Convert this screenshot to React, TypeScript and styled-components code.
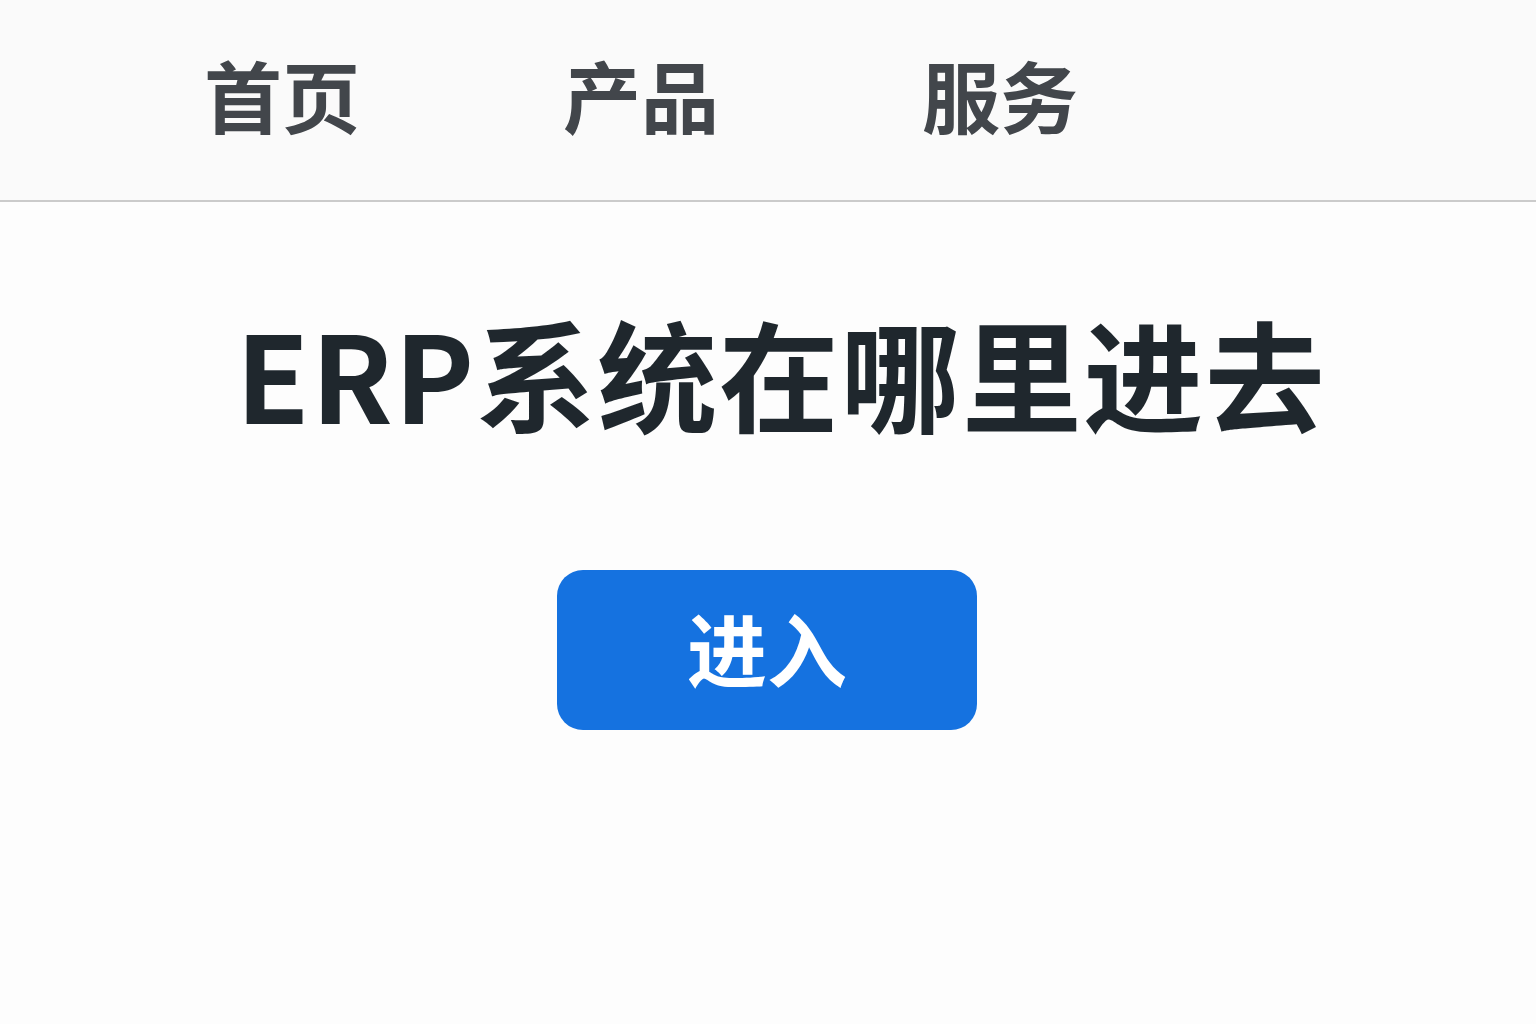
import React from 'react'
import styled, { createGlobalStyle } from 'styled-components'

const GlobalStyle = createGlobalStyle`
	html, body {
		margin: 0;
		padding: 0;
		background: #fdfdfd;
	}
	body {
		font-family: 'Noto Sans CJK SC', 'Noto Sans', sans-serif;
	}
`

const Page = styled.div`
	width: 1536px;
	min-height: 1024px;
	display: flex;
	flex-direction: column;
`

const NavBar = styled.nav`
	height: 202px;
	box-sizing: border-box;
	background: #fafafa;
	border-bottom: 2px solid #cbcbcb;
	display: flex;
	align-items: center;
	padding-left: 204px;
	gap: 203px;
`

const NavLink = styled.a`
	font-size: 78px;
	font-weight: 700;
	color: #42464b;
	text-decoration: none;
	line-height: 1;
	margin-top: -12px;
`

const Main = styled.main`
	display: flex;
	flex-direction: column;
	align-items: center;
	padding-top: 92px;
	padding-left: 26px;
`

const Title = styled.h1`
	margin: 0;
	font-size: 120px;
	font-weight: 700;
	line-height: 1.3;
	color: #1f272d;
	letter-spacing: 1.5px;
`

const EnterButton = styled.button`
	margin-top: 120px;
	margin-left: -28px;
	width: 420px;
	height: 160px;
	padding: 0 0 8px;
	border: none;
	border-radius: 26px;
	background: #1572e0;
	color: #ffffff;
	font-family: inherit;
	font-size: 80px;
	font-weight: 700;
	line-height: 1;
	cursor: pointer;
	display: flex;
	align-items: center;
	justify-content: center;
`

const links = ['首页', '产品', '服务']

export default function App() {
	return (
		<Page>
			<GlobalStyle />
			<NavBar>
				{links.map((l) => (
					<NavLink key={l} href="#">
						{l}
					</NavLink>
				))}
			</NavBar>
			<Main>
				<Title>ERP系统在哪里进去</Title>
				<EnterButton>进入</EnterButton>
			</Main>
		</Page>
	)
}
